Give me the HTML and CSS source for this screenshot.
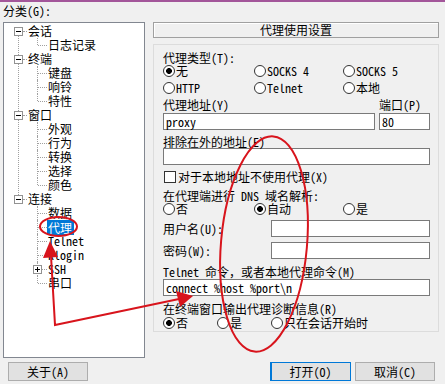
FILE: index.html
```html
<!DOCTYPE html>
<html>
<head lang="zh-CN">
    <meta charset="UTF-8">
    <title>代理使用设置</title>
    <link rel="stylesheet" href="styles.css">
</head>
<body>
<div class="page">
    <div class="main">
        <div class="side">
            <div class="side-label">分类(G):</div>
            <ul class="tree">
                <li class="top">
                    <div class="row"><span class="box"></span><span class="dash"></span>会话</div>
                    <ul class="kids">
                        <li><div class="row"><span class="dash"></span>日志记录</div></li>
                    </ul>
                </li>
                <li class="top">
                    <div class="row"><span class="box"></span><span class="dash"></span>终端</div>
                    <ul class="kids">
                        <li><div class="row"><span class="dash"></span>键盘</div></li>
                        <li><div class="row"><span class="dash"></span>响铃</div></li>
                        <li><div class="row"><span class="dash"></span>特性</div></li>
                    </ul>
                </li>
                <li class="top">
                    <div class="row"><span class="box"></span><span class="dash"></span>窗口</div>
                    <ul class="kids">
                        <li><div class="row"><span class="dash"></span>外观</div></li>
                        <li><div class="row"><span class="dash"></span>行为</div></li>
                        <li><div class="row"><span class="dash"></span>转换</div></li>
                        <li><div class="row"><span class="dash"></span>选择</div></li>
                        <li><div class="row"><span class="dash"></span>颜色</div></li>
                    </ul>
                </li>
                <li class="top">
                    <div class="row"><span class="box"></span><span class="dash"></span>连接</div>
                    <ul class="kids">
                        <li><div class="row"><span class="dash"></span>数据</div></li>
                        <li><div class="row"><span class="dash"></span><span class="sel">代理</span></div></li>
                        <li><div class="row"><span class="dash"></span>Telnet</div></li>
                        <li><div class="row"><span class="dash"></span>Rlogin</div></li>
                        <li><div class="row sub"><span class="box plus"></span><span class="dash"></span>SSH</div></li>
                        <li><div class="row"><span class="dash"></span>串口</div></li>
                    </ul>
                </li>
            </ul>
        </div>

        <div class="panel">
            <div class="title">代理使用设置</div>
            <div class="group">
                <div class="lbl mt6">代理类型(T):</div>
                <div class="opts three">
                    <span class="opt"><i class="radio on"></i>无</span>
                    <span class="opt"><i class="radio"></i>SOCKS 4</span>
                    <span class="opt"><i class="radio"></i>SOCKS 5</span>
                </div>
                <div class="opts three mt4">
                    <span class="opt"><i class="radio"></i>HTTP</span>
                    <span class="opt"><i class="radio"></i>Telnet</span>
                    <span class="opt"><i class="radio"></i>本地</span>
                </div>
                <div class="addr mt4">
                    <div class="lbl">代理地址(Y)</div>
                    <div class="lbl">端口(P)</div>
                    <div class="field">proxy</div>
                    <div class="field">80</div>
                </div>
                <div class="lbl mt5">排除在外的地址(E)</div>
                <div class="field"></div>
                <div class="opt mt5"><i class="check"></i>对于本地地址不使用代理(X)</div>
                <div class="lbl mt6">在代理端进行 DNS 域名解析:</div>
                <div class="opts three">
                    <span class="opt"><i class="radio"></i>否</span>
                    <span class="opt"><i class="radio on"></i>自动</span>
                    <span class="opt"><i class="radio"></i>是</span>
                </div>
                <div class="pair mt5">
                    <div class="lbl">用户名(U):</div>
                    <div class="field"></div>
                </div>
                <div class="pair mt5">
                    <div class="lbl">密码(W):</div>
                    <div class="field"></div>
                </div>
                <div class="lbl mt6">Telnet 命令，或者本地代理命令(M)</div>
                <div class="field mt1">connect %host %port\n</div>
                <div class="lbl mt6">在终端窗口输出代理诊断信息(R)</div>
                <div class="opts narrow mt1">
                    <span class="opt"><i class="radio on"></i>否</span>
                    <span class="opt"><i class="radio"></i>是</span>
                    <span class="opt"><i class="radio"></i>只在会话开始时</span>
                </div>
            </div>
        </div>
    </div>

    <div class="buttons">
        <div class="btn">关于(A)</div>
        <div class="btn default">打开(O)</div>
        <div class="btn">取消(C)</div>
    </div>
</div>

<svg class="marks" width="445" height="384" viewBox="0 0 445 384">
    <g fill="none" stroke="#d8141c" stroke-width="2">
        <ellipse cx="58.5" cy="226.5" rx="18.5" ry="9.5"/>
        <ellipse cx="264" cy="244" rx="43" ry="108" transform="rotate(5 264 244)"/>
        <polyline points="51,256 55,325 179,299"/>
    </g>
    <g fill="#d8141c">
        <polygon points="50,241 43,258 58,257"/>
        <polygon points="193,296 176,291 180,307"/>
    </g>
</svg>
</body>
</html>
```

FILE: styles.css
```css
* {
    margin: 0;
    padding: 0;
    box-sizing: border-box;
}

body {
    position: relative;
    width: 445px;
    height: 384px;
    overflow: hidden;
    background-color: #f0f0f0;
    color: #000;
    font-size: 12px;
    line-height: 13px;
    font-family: "Noto Sans Mono CJK SC", "Liberation Mono", "Noto Sans CJK SC", monospace;
}

.page {
    border-top: 2px solid #a3569a;
}

.main {
    display: flex;
    gap: 8px;
    padding: 1px 0 0 3px;
}

/* left: category tree */
.side {
    width: 142px;
}

.side-label {
    height: 16px;
    line-height: 16px;
    margin-bottom: 3px;
}

.tree {
    height: 336px;
    padding-top: 1px;
    list-style: none;
    background-color: #fff;
    border: 1px solid #828790;
}

.tree li {
    position: relative;
    list-style: none;
}

.tree .top:not(:last-child)::before {
    content: "";
    position: absolute;
    left: 14px;
    top: 7px;
    bottom: -7px;
    border-left: 1px dotted #a0a0a0;
}

.kids li::before {
    content: "";
    position: absolute;
    left: 33px;
    top: 0;
    bottom: 0;
    border-left: 1px dotted #a0a0a0;
}

.kids li:last-child::before {
    bottom: auto;
    height: 7px;
}

.row {
    display: flex;
    align-items: center;
    height: 14px;
    line-height: 14px;
    white-space: nowrap;
}

.top > .row {
    padding-left: 10px;
}

.top > .row .dash {
    width: 4px;
    margin-right: 1px;
}

.kids .row {
    padding-left: 34px;
}

.kids .row.sub {
    padding-left: 29px;
}

.dash {
    width: 9px;
    height: 0;
    margin-right: 1px;
    border-top: 1px dotted #a0a0a0;
}

.sub .dash {
    width: 5px;
}

.box {
    position: relative;
    z-index: 1;
    width: 9px;
    height: 9px;
    background-color: #fff;
    border: 1px solid #929292;
}

.box::before {
    content: "";
    position: absolute;
    left: 1px;
    top: 3px;
    width: 5px;
    height: 1px;
    background-color: #000;
}

.box.plus::after {
    content: "";
    position: absolute;
    left: 3px;
    top: 1px;
    width: 1px;
    height: 5px;
    background-color: #000;
}

.sel {
    margin-left: -1px;
    padding: 1px 2px 0 1px;
    background-color: #0078d7;
    color: #fff;
}

/* right: proxy settings */
.panel {
    width: 286px;
    padding-top: 19px;
}

.title {
    height: 16px;
    line-height: 14px;
    text-align: center;
    border: 1px solid #a0a0a0;
    box-shadow: inset 1px 1px 0 #fff;
}

.group {
    height: 288px;
    margin-top: 6px;
    padding: 0 8px 0 9px;
    border: 1px solid #dcdcdc;
}

.lbl {
    line-height: 13px;
    white-space: nowrap;
}

.opts {
    display: grid;
    line-height: 13px;
}

.opts.three {
    grid-template-columns: 91px 89px 1fr;
}

.opts.narrow {
    grid-template-columns: 54px 54px 1fr;
}

.opt {
    display: flex;
    align-items: center;
    line-height: 13px;
    white-space: nowrap;
}

.radio {
    width: 12px;
    height: 12px;
    margin-right: 1px;
    border: 1px solid #333;
    border-radius: 50%;
    background-color: #fff;
}

.radio.on {
    background: radial-gradient(circle, #000 0 2.6px, #fff 3.2px);
}

.check {
    width: 12px;
    height: 12px;
    margin: 0 2px 0 1px;
    border: 1px solid #333;
    background-color: #fff;
}

.field {
    height: 17px;
    padding-left: 2px;
    line-height: 15px;
    white-space: nowrap;
    background-color: #fff;
    border: 1px solid #7a7a7a;
}

.addr {
    display: grid;
    grid-template-columns: 1fr 51px;
    column-gap: 4px;
    row-gap: 2px;
}

.pair {
    display: grid;
    grid-template-columns: 108px 1fr;
    align-items: center;
}

.mt1 { margin-top: 1px; }
.mt4 { margin-top: 4px; }
.mt5 { margin-top: 5px; }
.mt6 { margin-top: 6px; }

/* bottom buttons */
.buttons {
    display: flex;
    margin-top: 4px;
    padding: 0 10px 0 8px;
}

.btn {
    width: 80px;
    height: 19px;
    line-height: 17px;
    text-align: center;
    background-color: #e1e1e1;
    border: 1px solid #adadad;
}

.btn.default {
    width: 81px;
    margin-left: auto;
    border-color: #0078d7;
    box-shadow: inset 1px 0 0 #0078d7;
}

.btn + .btn.default + .btn {
    margin-left: 4px;
}

.marks {
    position: absolute;
    left: 0;
    top: 0;
    pointer-events: none;
}
```
